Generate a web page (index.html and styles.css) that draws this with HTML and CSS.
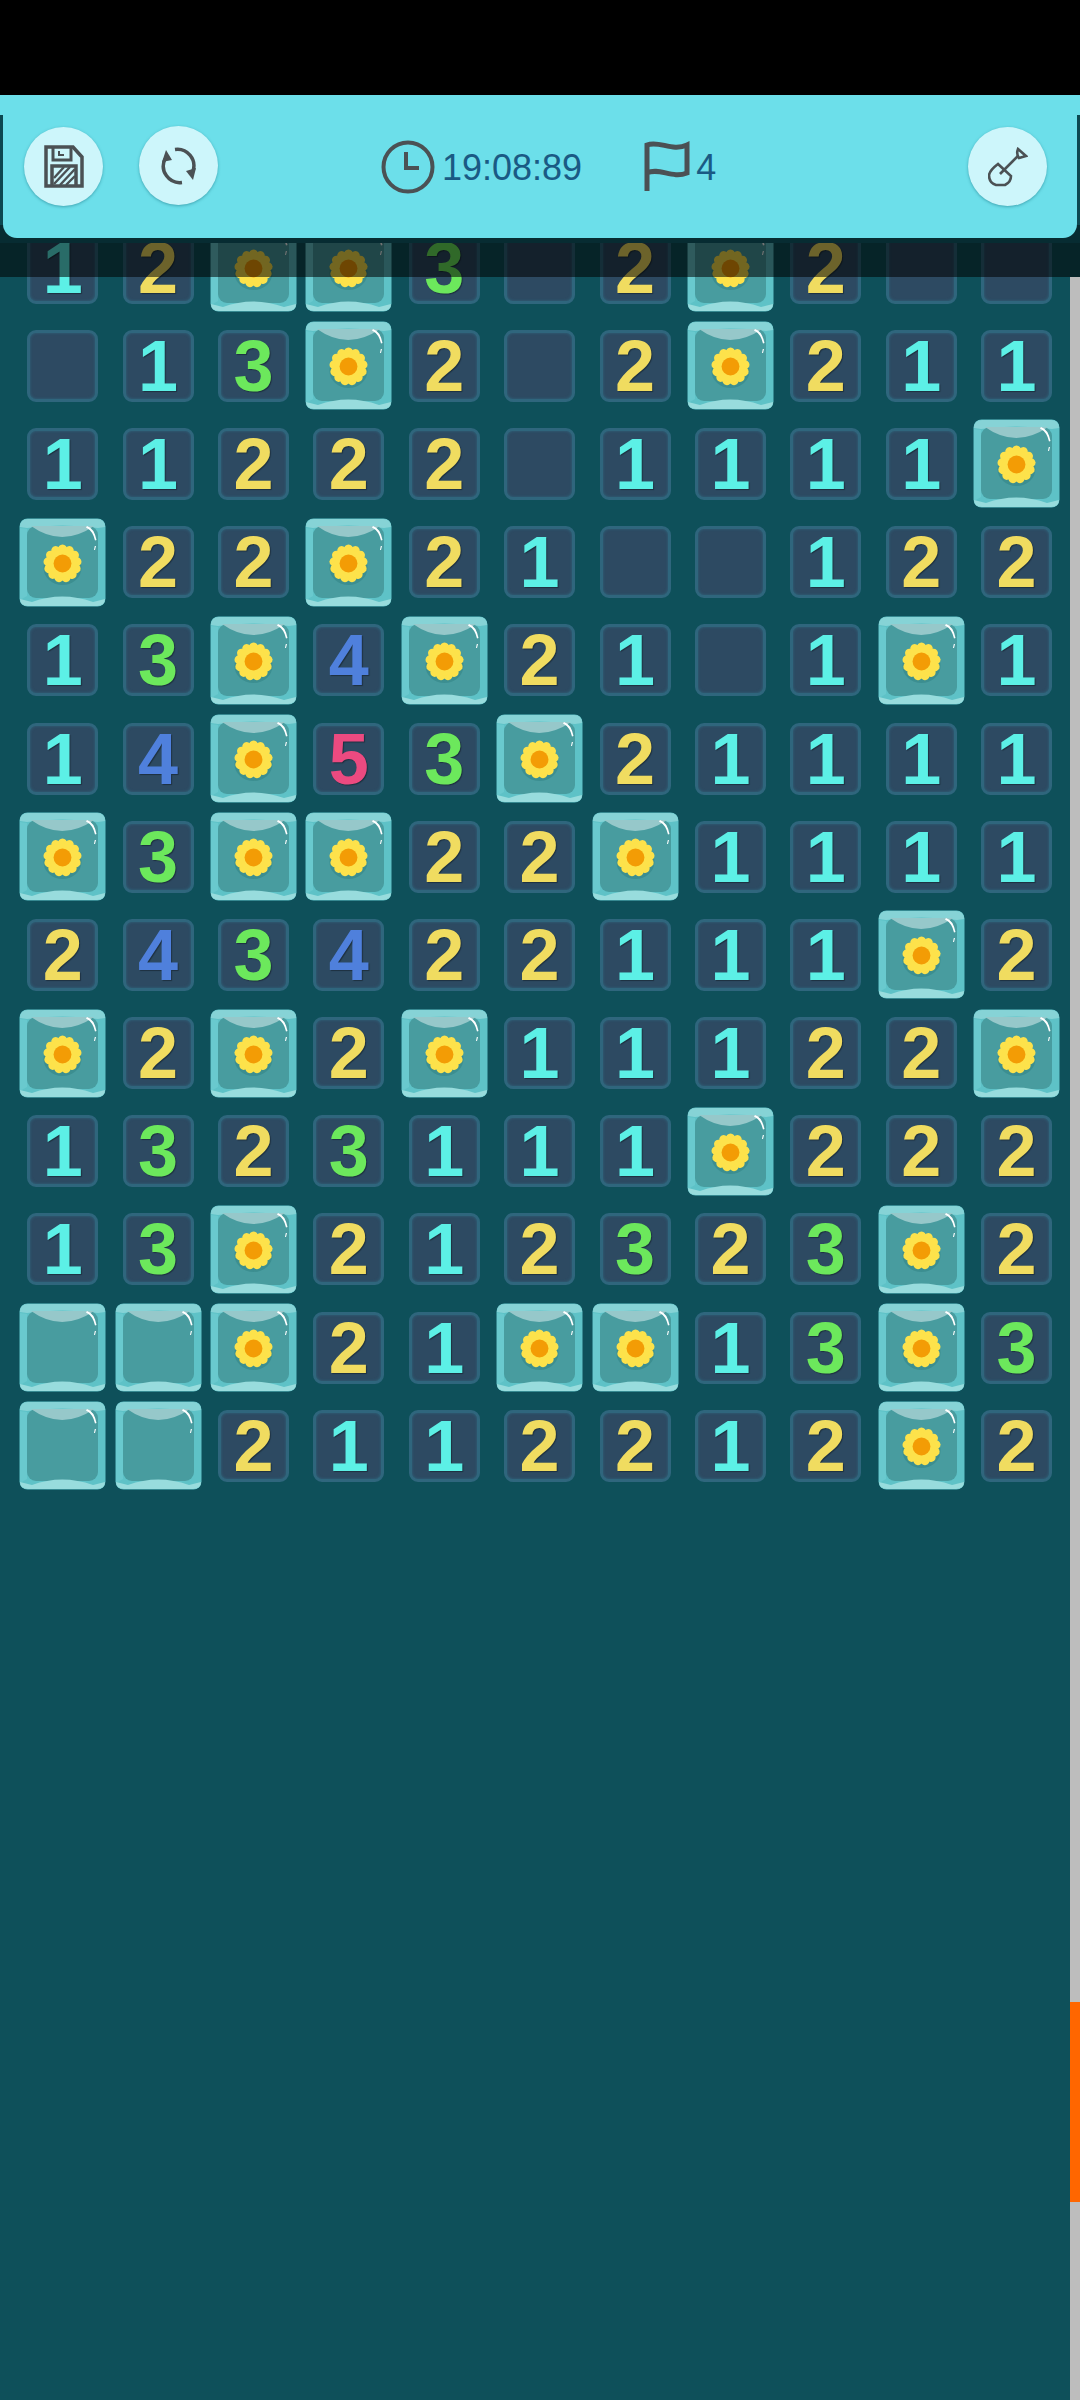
FILE: index.html
```html
<!DOCTYPE html>
<html lang="en">
<head>
    <meta charset="UTF-8" />
    <meta name="viewport" content="width=device-width, initial-scale=1.0" />
    <title>Minesweeper</title>
    <link rel="stylesheet" href="styles.css">
</head>
<body>
    <svg class="defs" width="0" height="0">
        <symbol id="glass" viewBox="0 0 87 89">
            <rect x="0.5" y="0.5" width="86" height="88" rx="8" fill="#5ec2c7" />
            <path d="M1 9 Q1 1 9 1 H78 Q86 1 86 9 L79 10 Q43 5 8 10 Z" fill="#86d3d6" />
            <path d="M1 10 L8 11 V78 L1 82 Z" fill="#69c9ce" />
            <rect x="8" y="8" width="71" height="72" rx="9" fill="#489c9f" />
            <path d="M12 8 Q43 30 75 8 Z" fill="#96c8ca" />
            <path d="M1 81 Q1 88 9 88 H78 Q86 88 86 81 L74 84 Q43 73 13 84 Z" fill="#98dcdd" />
            <path d="M68 8 Q75 10 77.5 22 L76 22.5 Q74 13 67 9.5 Z" fill="#fff" />
            <path d="M77 28 L76 32 L75 32 L75.8 28 Z" fill="#fff" />
        </symbol>
        <symbol id="daisy" viewBox="-20 -20 40 40" overflow="visible">
            <ellipse cx="0" cy="-13" rx="4.6" ry="5.2" fill="#fde24b" />
            <ellipse cx="0" cy="-13" rx="4.6" ry="5.2" fill="#fde24b" transform="rotate(27.7)" />
            <ellipse cx="0" cy="-13" rx="4.6" ry="5.2" fill="#fde24b" transform="rotate(55.4)" />
            <ellipse cx="0" cy="-13" rx="4.6" ry="5.2" fill="#fde24b" transform="rotate(83.1)" />
            <ellipse cx="0" cy="-13" rx="4.6" ry="5.2" fill="#fde24b" transform="rotate(110.8)" />
            <ellipse cx="0" cy="-13" rx="4.6" ry="5.2" fill="#fde24b" transform="rotate(138.5)" />
            <ellipse cx="0" cy="-13" rx="4.6" ry="5.2" fill="#fde24b" transform="rotate(166.2)" />
            <ellipse cx="0" cy="-13" rx="4.6" ry="5.2" fill="#fde24b" transform="rotate(193.9)" />
            <ellipse cx="0" cy="-13" rx="4.6" ry="5.2" fill="#fde24b" transform="rotate(221.6)" />
            <ellipse cx="0" cy="-13" rx="4.6" ry="5.2" fill="#fde24b" transform="rotate(249.3)" />
            <ellipse cx="0" cy="-13" rx="4.6" ry="5.2" fill="#fde24b" transform="rotate(277)" />
            <ellipse cx="0" cy="-13" rx="4.6" ry="5.2" fill="#fde24b" transform="rotate(304.7)" />
            <ellipse cx="0" cy="-13" rx="4.6" ry="5.2" fill="#fde24b" transform="rotate(332.4)" />
            <circle r="13" fill="#fde24b" />
            <circle r="8.5" fill="#f39c05" />
        </symbol>
        <symbol id="ice" viewBox="0 0 87 89">
            <use href="#glass" width="87" height="89" />
        </symbol>
        <symbol id="ice-flower" viewBox="0 0 87 89">
            <use href="#glass" width="87" height="89" />
            <ellipse cx="43.5" cy="50" rx="19" ry="17" fill="#1d6a6c" opacity="0.28" />
            <use href="#daisy" x="22.5" y="24.5" width="42" height="42" />
        </symbol>
    </svg>

    <div class="status-bar"></div>

    <div class="top">
        <header class="panel">
            <button class="round">
                <svg width="40" height="43" viewBox="0 0 40 43" class="icon">
                    <path d="M2 2 H29 L38 12 V41 H2 Z" stroke-width="3.5" />
                    <path d="M9 2 V15 H27 V2" />
                    <path d="M15 6 V10 H20" stroke-width="2" />
                    <path d="M8 41 V21 H32 V41" stroke-width="3.5" />
                    <path d="M10 33 L20 22 M10 39 L26 22 M16 40 L31 24 M22 40 L31 31" stroke-width="2.4" />
                </svg>
            </button>
            <button class="round sync">
                <svg width="38" height="38" viewBox="0 0 38 38" class="icon">
                    <path d="M15 2.5 A16.5 16.5 0 0 1 33 24" stroke-width="3.5" />
                    <path d="M22 35.5 A16.5 16.5 0 0 1 5 12" stroke-width="3.5" />
                    <path class="solid" d="M26 24 L36 21 L33 33 Z" />
                    <path class="solid" d="M12 13 L2 15 L6 3 Z" />
                </svg>
            </button>
            <svg class="clock icon" width="54" height="54" viewBox="0 0 54 54">
                <circle cx="27" cy="27" r="24.5" />
                <path d="M25 12 V28 H38" />
            </svg>
            <span class="stat time">19:08:89</span>
            <svg class="flag icon" width="46" height="52" viewBox="0 0 46 52">
                <path d="M3 50 V4 C15 -1 28 11 43 4 V32 C28 38 15 26 3 32" stroke-width="5" />
            </svg>
            <span class="stat">4</span>
            <button class="round shovel">
                <svg width="40" height="40" viewBox="0 0 40 40" class="icon thin">
                    <path d="M10 17 L23 29 Q23 35 17 38 H8 Q1 36 1 28 Q2 23 10 17 Z" />
                    <path d="M12 27 L30 9" />
                    <path d="M30 2 L38 9 L31 11 Q28 7 30 2 Z" />
                </svg>
            </button>
        </header>
    </div>
    <div class="dim"></div>

    <main class="board">
        <div class="num one">1</div><div class="num two">2</div><svg class="tile"><use href="#ice-flower" /></svg><svg class="tile"><use href="#ice-flower" /></svg><div class="num three">3</div><div class="num"></div><div class="num two">2</div><svg class="tile"><use href="#ice-flower" /></svg><div class="num two">2</div><div class="num"></div><div class="num"></div>
        <div class="num"></div><div class="num one">1</div><div class="num three">3</div><svg class="tile"><use href="#ice-flower" /></svg><div class="num two">2</div><div class="num"></div><div class="num two">2</div><svg class="tile"><use href="#ice-flower" /></svg><div class="num two">2</div><div class="num one">1</div><div class="num one">1</div>
        <div class="num one">1</div><div class="num one">1</div><div class="num two">2</div><div class="num two">2</div><div class="num two">2</div><div class="num"></div><div class="num one">1</div><div class="num one">1</div><div class="num one">1</div><div class="num one">1</div><svg class="tile"><use href="#ice-flower" /></svg>
        <svg class="tile"><use href="#ice-flower" /></svg><div class="num two">2</div><div class="num two">2</div><svg class="tile"><use href="#ice-flower" /></svg><div class="num two">2</div><div class="num one">1</div><div class="num"></div><div class="num"></div><div class="num one">1</div><div class="num two">2</div><div class="num two">2</div>
        <div class="num one">1</div><div class="num three">3</div><svg class="tile"><use href="#ice-flower" /></svg><div class="num four">4</div><svg class="tile"><use href="#ice-flower" /></svg><div class="num two">2</div><div class="num one">1</div><div class="num"></div><div class="num one">1</div><svg class="tile"><use href="#ice-flower" /></svg><div class="num one">1</div>
        <div class="num one">1</div><div class="num four">4</div><svg class="tile"><use href="#ice-flower" /></svg><div class="num five">5</div><div class="num three">3</div><svg class="tile"><use href="#ice-flower" /></svg><div class="num two">2</div><div class="num one">1</div><div class="num one">1</div><div class="num one">1</div><div class="num one">1</div>
        <svg class="tile"><use href="#ice-flower" /></svg><div class="num three">3</div><svg class="tile"><use href="#ice-flower" /></svg><svg class="tile"><use href="#ice-flower" /></svg><div class="num two">2</div><div class="num two">2</div><svg class="tile"><use href="#ice-flower" /></svg><div class="num one">1</div><div class="num one">1</div><div class="num one">1</div><div class="num one">1</div>
        <div class="num two">2</div><div class="num four">4</div><div class="num three">3</div><div class="num four">4</div><div class="num two">2</div><div class="num two">2</div><div class="num one">1</div><div class="num one">1</div><div class="num one">1</div><svg class="tile"><use href="#ice-flower" /></svg><div class="num two">2</div>
        <svg class="tile"><use href="#ice-flower" /></svg><div class="num two">2</div><svg class="tile"><use href="#ice-flower" /></svg><div class="num two">2</div><svg class="tile"><use href="#ice-flower" /></svg><div class="num one">1</div><div class="num one">1</div><div class="num one">1</div><div class="num two">2</div><div class="num two">2</div><svg class="tile"><use href="#ice-flower" /></svg>
        <div class="num one">1</div><div class="num three">3</div><div class="num two">2</div><div class="num three">3</div><div class="num one">1</div><div class="num one">1</div><div class="num one">1</div><svg class="tile"><use href="#ice-flower" /></svg><div class="num two">2</div><div class="num two">2</div><div class="num two">2</div>
        <div class="num one">1</div><div class="num three">3</div><svg class="tile"><use href="#ice-flower" /></svg><div class="num two">2</div><div class="num one">1</div><div class="num two">2</div><div class="num three">3</div><div class="num two">2</div><div class="num three">3</div><svg class="tile"><use href="#ice-flower" /></svg><div class="num two">2</div>
        <svg class="tile"><use href="#ice" /></svg><svg class="tile"><use href="#ice" /></svg><svg class="tile"><use href="#ice-flower" /></svg><div class="num two">2</div><div class="num one">1</div><svg class="tile"><use href="#ice-flower" /></svg><svg class="tile"><use href="#ice-flower" /></svg><div class="num one">1</div><div class="num three">3</div><svg class="tile"><use href="#ice-flower" /></svg><div class="num three">3</div>
        <svg class="tile"><use href="#ice" /></svg><svg class="tile"><use href="#ice" /></svg><div class="num two">2</div><div class="num one">1</div><div class="num one">1</div><div class="num two">2</div><div class="num two">2</div><div class="num one">1</div><div class="num two">2</div><svg class="tile"><use href="#ice-flower" /></svg><div class="num two">2</div>
    </main>

    <div class="scrollbar"><div class="thumb"></div></div>
</body>
</html>
```

FILE: styles.css
```css
html, body {
    margin: 0;
    height: 2400px;
    overflow: hidden;
}
body {
    position: relative;
    background-color: #0e505a;
    font-family: "Liberation Sans", Arial, sans-serif;
}
.defs {
    position: absolute;
}
.status-bar {
    height: 95px;
    background-color: #000;
}
.top {
    position: absolute;
    top: 95px;
    left: 0;
    right: 0;
    z-index: 3;
    padding: 0 3px 5px;
    background: linear-gradient(#6cdfea 20px, #0c4851 20px, #0c4851 130px, #072c32 130px);
}
.panel {
    display: flex;
    align-items: center;
    height: 143px;
    padding: 0 30px 0 21px;
    box-sizing: border-box;
    background-color: #6cdfea;
    border-radius: 0 0 14px 14px;
}
.round {
    display: flex;
    align-items: center;
    justify-content: center;
    flex: none;
    width: 79px;
    height: 79px;
    padding: 0;
    border: none;
    border-radius: 50%;
    background-color: #cdf6fb;
    box-shadow: 0 1px 3px rgba(20, 110, 125, 0.5);
}
.sync {
    margin-left: 36px;
    margin-top: -2px;
}
.shovel {
    margin-left: auto;
}
.icon {
    fill: none;
    stroke: #4b5154;
    stroke-width: 3;
}
.icon.thin {
    stroke-width: 2.6;
}
.icon .solid {
    fill: #4b5154;
    stroke: none;
}
.clock {
    margin-left: 163px;
    margin-right: 7px;
    flex: none;
    stroke-width: 4;
}
.flag {
    flex: none;
    margin-left: 62px;
    margin-right: 6px;
}
.stat {
    font-size: 36px;
    color: #1a5a84;
    margin-top: 2px;
}
.dim {
    position: absolute;
    top: 243px;
    left: 0;
    right: 0;
    height: 34px;
    z-index: 2;
    background-color: rgba(0, 0, 0, 0.55);
}
.board {
    display: grid;
    grid-template-columns: repeat(11, 95.4px);
    grid-auto-rows: 98.2px;
    place-items: center;
    padding: 123.5px 0 0 15px;
}
.num {
    width: 71px;
    height: 72px;
    box-sizing: border-box;
    border: 3px solid #2f667d;
    border-radius: 9px;
    background-color: #2d4a62;
    box-shadow: inset 0 0 3px #2f667d;
    font-size: 72px;
    font-weight: 700;
    line-height: 66px;
    text-align: center;
    text-shadow: 1px 1px 1px rgba(0, 0, 0, 0.35);
}
.one { color: #5cf0e6; }
.two { color: #f0dc60; }
.three { color: #6ce85c; }
.four { color: #4f80dc; }
.five { color: #ec4a80; }
.tile {
    width: 87px;
    height: 89px;
}
.scrollbar {
    position: absolute;
    top: 277px;
    right: 0;
    bottom: 0;
    width: 10px;
    background-color: #bdbdbd;
}
.thumb {
    margin-top: 1725px;
    height: 200px;
    background-color: #ff6600;
}
```
